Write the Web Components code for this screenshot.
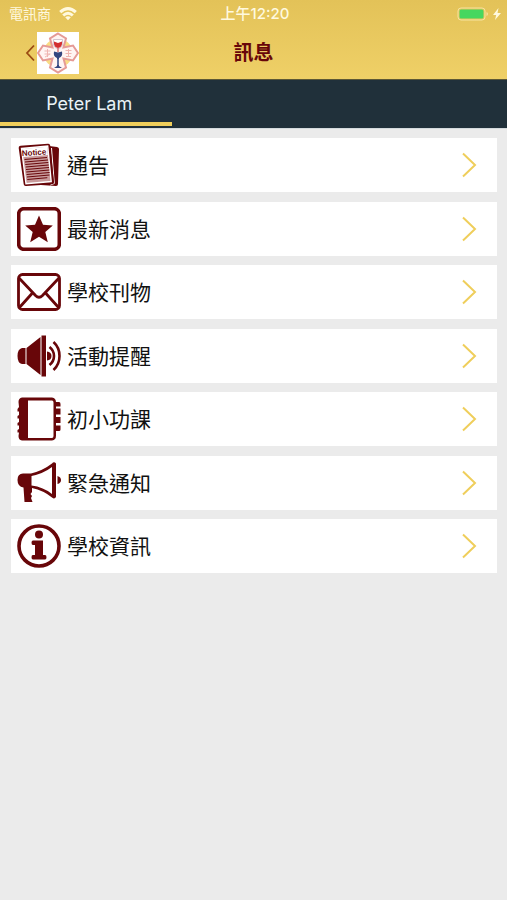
<!DOCTYPE html>
<html lang="zh-Hant">
<head>
<meta charset="utf-8">
<meta name="viewport" content="width=device-width, initial-scale=1">
<title>訊息</title>
<style>
    body {
        margin: 0;
        background: #ebebeb;
        font-family: Inter, "Noto Sans CJK TC", sans-serif;
        --maroon: #680609;
        --gold: #efce5b;
    }
</style>
</head>
<body>
<message-page></message-page>

<template id="status-bar">
    <style>
        :host {
            display: grid;
            grid-template-columns: 1fr auto 1fr;
            align-items: center;
            height: 27px;
            padding: 0 6px 0 9px;
            color: #fff9df;
            font-size: 14px;
            line-height: 27px;
        }
        .carrier, .power { display: flex; align-items: center; }
        .carrier { gap: 8px; }
        .time { font-size: 15px; }
        ::slotted(time) { font-weight: 500; }
        .power { justify-content: flex-end; gap: 4px; }
    </style>
    <span class="carrier">
        <slot name="carrier"></slot>
        <svg width="18" height="14" viewBox="0 0 18 14" fill="none" stroke="currentColor" stroke-width="3" aria-hidden="true">
            <path d="M1.2 5.2Q9-2 16.800 5.200M4.200 8.500Q9 4.100 13.800 8.500"/>
            <path d="M6.200 10.300Q9 8 11.800 10.300L9 13.200z" fill="currentColor" stroke="none"/>
        </svg>
    </span>
    <span class="time"><slot name="time"></slot></span>
    <span class="power">
        <svg width="32" height="14" viewBox="0 0 32 14" aria-hidden="true">
            <rect x="1" y="1" width="27" height="12" rx="3" fill="none" stroke="#f5e3a0"/>
            <rect x="2.500" y="2.500" width="24" height="9" rx="1.500" fill="#46d75f"/>
            <path d="M29.500 5v4q1.500-.6 1.500-2t-1.500-2z" fill="#f5e3a0"/>
        </svg>
        <svg width="8" height="12" viewBox="0 0 8 12" fill="currentColor" aria-hidden="true">
            <path d="M5.500 0L0 7h3.200L2 12l6-7H4.500z"/>
        </svg>
    </span>
</template>

<template id="title-bar">
    <style>
        :host {
            display: grid;
            grid-template-columns: 1fr auto 1fr;
            align-items: center;
            height: 52px;
            padding: 0 24px;
            color: var(--maroon);
        }
        button {
            display: flex;
            align-items: center;
            justify-self: start;
            gap: 2px;
            padding: 0;
            border: 0;
            background: none;
            color: #9a4a12;
        }
        h1 { margin: 0; font-size: 20px; line-height: 28px; font-weight: 700; }
    </style>
    <button type="button" aria-label="返回">
        <svg width="11" height="18" viewBox="0 0 11 18" fill="none" stroke="currentColor" stroke-width="1.800">
            <path d="M10 1.500L3 9l7 7.500"/>
        </svg>
        <svg width="42" height="42" viewBox="0 0 42 42">
            <path d="M0 0h42v42H0z" fill="#fff"/>
            <circle cx="21" cy="21" r="14.500" fill="#f9dc85"/>
            <path d="M21 1.500l8 5-2.500 9L36 13.500l5 7.500-5 7.500-9.500-2 2.500 9-8 5-8-5 2.500-9-9.500 2L1 21l5-7.500 9.500 2-2.500-9z" fill="#fff4f3" stroke="#e59a96" stroke-width="2"/>
            <path d="M7.500 19h6M10.500 17v8M7.500 22h6M8 25l5-3M28.500 18.500h6M31.500 17v8M28.500 21.500h6M29 24.500h5" stroke="#efb5b1" fill="none"/>
            <path d="M16.500 7.500h9v4q0 4.500-4.500 5-4.500-.5-4.500-5z" fill="#fff" stroke="#c9b8c4" stroke-width=".8"/>
            <path d="M17 9.500l4 1.500 4-1.500v2.500q-.5 3.500-4 4-3.500-.5-4-4z" fill="#d32e30"/>
            <path d="M21 16v4" stroke="#d77578" stroke-width="1.500"/>
            <path d="M17 19.500l4 1 4-1q1 5-3 6.500v8l3 2h-8l3-2v-8q-4-1.500-3-6.500z" fill="#34457f"/>
            <path d="M21 27v6" stroke="#8596ba"/>
        </svg>
    </button>
    <h1><slot></slot></h1>
</template>

<template id="student-tabs">
    <style>
        :host {
            display: flex;
            height: 48px;
            border-top: 1px solid #5d5835;
            background: #20303a;
            box-shadow: 0 1px #d4dadd;
        }
        button {
            flex: 0 0 34%;
            display: flex;
            flex-direction: column;
            justify-content: flex-end;
            padding: 0 0 2px;
            border: 0;
            background: none;
            color: #e9f3f7;
            font: 18px/32px Inter, "Noto Sans CJK TC", sans-serif;
        }
        .name { align-self: center; padding: 0 0 2px 6px; }
        .line { align-self: stretch; height: 4px; background: var(--gold); }
    </style>
    <button type="button" role="tab" aria-selected="true">
        <span class="name"><slot></slot></span>
        <span class="line"></span>
    </button>
</template>

<template id="menu-row">
    <style>
        :host { display: block; background: #fff; }
        a {
            display: flex;
            align-items: center;
            gap: 6px;
            padding: 5px 20px 5px 6px;
            color: #111;
            font-size: 21px;
            line-height: 30px;
            text-decoration: none;
        }
        .label { flex: 1; padding-top: 2px; }
        .icon { display: flex; color: var(--maroon); }
        .arrow { fill: none; stroke: var(--gold); stroke-width: 2; }
    </style>
    <a href="#">
        <span class="icon"></span>
        <span class="label"><slot></slot></span>
        <svg class="arrow" width="16" height="26" viewBox="0 0 16 26" aria-hidden="true"><path d="M2 1.500L14 13 2 24.500"/></svg>
    </a>
</template>

<template id="message-page">
    <style>
        :host { display: block; }
        header { background: linear-gradient(#e3c258, #efd067); }
        nav {
            display: flex;
            flex-direction: column;
            justify-content: space-between;
            min-height: 435px;
            padding: 10px 10px 10px 11px;
        }
    </style>
    <header>
        <status-bar><span slot="carrier">電訊商</span><time slot="time">上午12:20</time></status-bar>
        <title-bar>訊息</title-bar>
    </header>
    <student-tabs>Peter Lam</student-tabs>
    <nav>
        <menu-row icon="notice">通告</menu-row>
        <menu-row icon="star">最新消息</menu-row>
        <menu-row icon="mail">學校刊物</menu-row>
        <menu-row icon="speaker">活動提醒</menu-row>
        <menu-row icon="notebook">初小功課</menu-row>
        <menu-row icon="megaphone">緊急通知</menu-row>
        <menu-row icon="info">學校資訊</menu-row>
    </nav>
</template>

<script>
// All icons share a 44 x 44 box and take their colour from the row
const ICONS = {
    notice: `
        <path d="M32 3l8 1q2 .3 2 2l-1 35q0 2-2 2l-15-1z" fill="currentColor"/>
        <path d="M34.500 5l2.800 35.500-4 1.500" fill="none" stroke="#fff" stroke-width="1"/>
        <path d="M3.500 2.800L31 .8q2-.2 2.200 1.800L37 39q.2 2-1.800 2.200L9 43q-2 .2-2.300-1.800L1.700 5q-.3-2 1.800-2.200z" fill="currentColor"/>
        <path d="M4.500 5.500L30.700 3l3.500 35.500L9 40.700z" fill="#c89a9b" stroke="#fff" stroke-width="1.400"/>
        <path d="M5.300 6L30 3.700l.8 8.300-24.500 2z" fill="#fff"/>
        <text x="5" y="13" transform="rotate(-4 6 12)" font-family="Liberation Sans, sans-serif" font-size="8" font-weight="700" fill="currentColor">Notice</text>
        <path d="M7.500 16.500l22.500-2M8 19l23-2M8.300 21.500l23-2M8.700 24l23-2M9 26.500l23-2M9.300 29l23-2M9.600 31.500l23-2M10 34l22.500-2M10.300 36.500l20-1.800" stroke="currentColor" stroke-width="1"/>`,
    star: `
        <rect x="1.700" y="1.700" width="40.600" height="40.600" rx="5" fill="none" stroke="currentColor" stroke-width="3.600"/>
        <path d="M22 8.500l4 9.300 9.800.8-7.500 6.400 2.500 10.200-8.800-5.500-8.800 5.500 2.500-10.200-7.500-6.400 9.800-.8z" fill="currentColor"/>`,
    mail: `
        <g fill="none" stroke="currentColor" stroke-width="2.800">
            <rect x="1.500" y="4.500" width="41" height="35" rx="4"/>
            <path d="M2 8l16.500 17.500q3.500 3.500 7 0L42 8M2 38l13-14.500M42 38L29 23.500"/>
        </g>`,
    speaker: `
        <path d="M8.500 14v16H5q-4.500-1-4.500-8T5 14zM9.500 14L23.500 3v38L9.500 30zM24.500 1.500h4.500v41h-4.500zM30 17.500q4.500.5 4.500 4.500t-4.500 4.500z" fill="currentColor"/>
        <path d="M32.500 13q4.500 3.500 4.500 9t-4.500 9M36.500 8q6 5.500 6 14t-6 14" fill="none" stroke="currentColor" stroke-width="2.600"/>`,
    notebook: `
        <path d="M38 5h4q1.500 0 1.500 2v2.500H38zM38 11.500h5.500v6H38zM38 20h5.500v6H38zM38 28.500h5.500v4q0 1.500-1.500 1.500h-4z" fill="currentColor"/>
        <path d="M5 .5h30q4 .5 4 5v33q0 4.500-4 5H5q-3.500-.5-3.500-4.500L2 35.500H.5V33L2 32v-3.500H.5V26L2 25v-3.500H.5V19L2 18v-3.500H.5V12L2 10 1.500 5Q1.500 1 5 .5zM11 3.500V41h24q1.500 0 1.500-2V5.500q0-2-1.500-2z" fill="currentColor" fill-rule="evenodd"/>`,
    megaphone: `
        <path d="M35 2.500q2-2.500 4 0V36q-1.500 2.500-4 .5-8.500-7-20-9.500v4l-1.500 2 1.500 2-1 2 1.500 4H7.500l-1-14.500Q.5 25.500.5 19t5.500-6.500h8q12-3 21-10zM35 6q-8.500 6.500-20.500 9v9.500q12 1.500 20.500 8.500z" fill="currentColor" fill-rule="evenodd"/>
        <path d="M40.500 15q3.500 1 3.500 4t-3.500 4z" fill="currentColor"/>`,
    info: `
        <circle cx="22" cy="22" r="20" fill="none" stroke="currentColor" stroke-width="3.600"/>
        <circle cx="22" cy="10.500" r="4" fill="currentColor"/>
        <path d="M16 16.500h10V31h2q1.500 0 1.500 2.200T28 35.500H16q-1.500 0-1.500-2.300T16 31h2V21h-2q-1.500 0-1.500-2.200t1.500-2.300z" fill="currentColor"/>`,
};

class TemplateElement extends HTMLElement {
    constructor() {
        super();
        const template = document.getElementById(this.localName);
        this.attachShadow({ mode: "open" }).append(template.content.cloneNode(true));
    }
}

class MenuRow extends TemplateElement {
    connectedCallback() {
        const icon = ICONS[this.getAttribute("icon")];
        this.shadowRoot.querySelector(".icon").innerHTML =
            `<svg width="44" height="44" viewBox="0 0 44 44" aria-hidden="true">${icon}</svg>`;
    }
}

customElements.define("status-bar", class extends TemplateElement {});
customElements.define("title-bar", class extends TemplateElement {});
customElements.define("student-tabs", class extends TemplateElement {});
customElements.define("menu-row", MenuRow);
customElements.define("message-page", class extends TemplateElement {});
</script>
</body>
</html>
